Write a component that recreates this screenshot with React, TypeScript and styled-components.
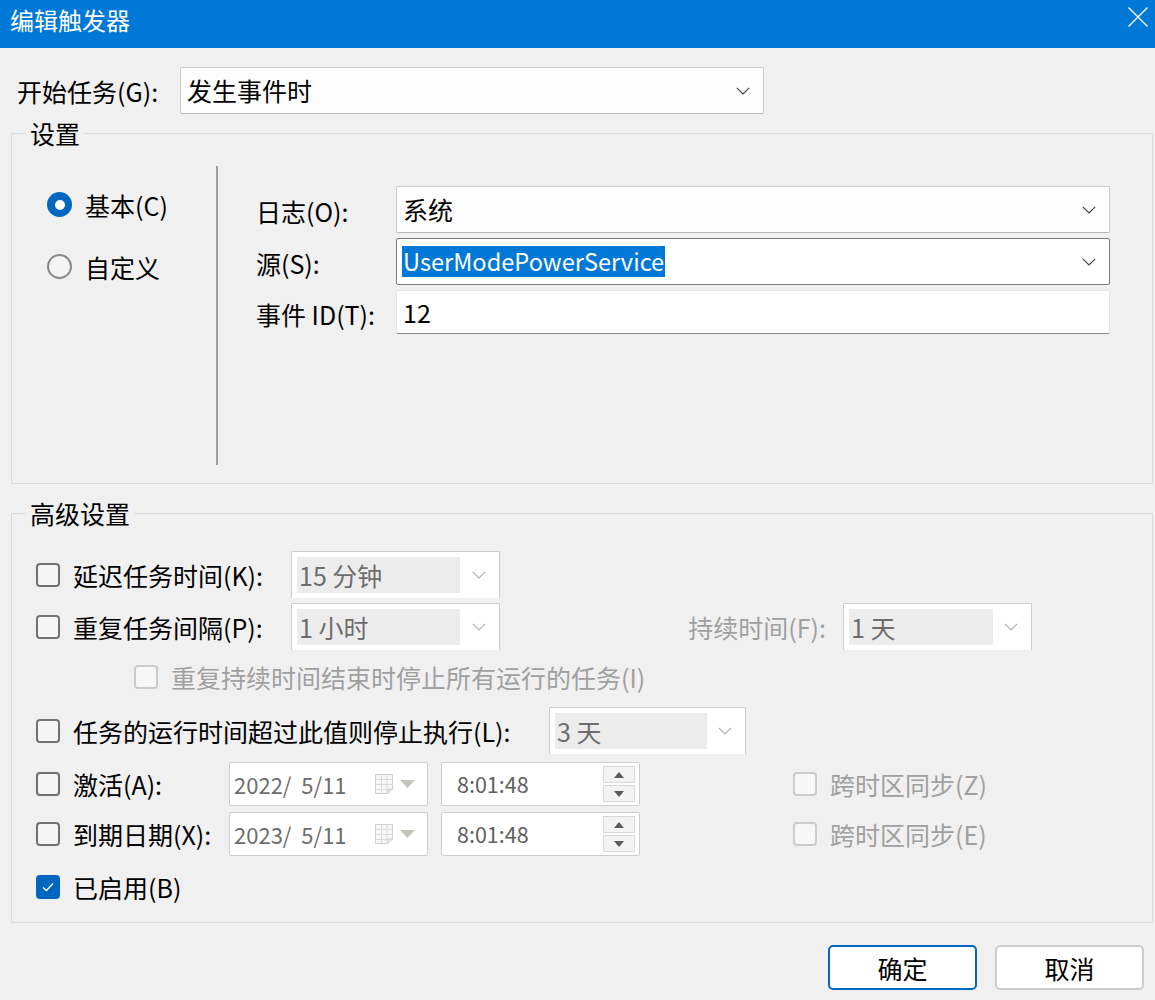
import React from "react";
import styled, { createGlobalStyle } from "styled-components";

const FONT = `"Noto Sans CJK SC", "Noto Sans", sans-serif`;

const GlobalStyle = createGlobalStyle`
  html, body { margin: 0; padding: 0; background: #f0f0f0; }
  body { font-family: ${FONT}; font-size: 25px; color: #000; }
  * { box-sizing: border-box; }
`;

const Window = styled.div`
  width: 1155px;
  height: 1000px;
  background: #f0f0f0;
  display: flex;
  flex-direction: column;
  overflow: hidden;
`;

const TitleBar = styled.div`
  height: 48px;
  flex: none;
  background: #0078d7;
  display: flex;
  align-items: flex-start;
  justify-content: space-between;
  padding: 5px 7px 0 10px;
`;

const Title = styled.div`
  color: #fff;
  font-size: 24px;
  line-height: 30px;
`;

const CloseButton = styled.div`
  width: 20px;
  height: 20px;
  margin-top: 2px;
  display: flex;
`;

const Body = styled.div`
  padding: 0 2px 0 11px;
  display: flex;
  flex-direction: column;
`;

const StartRow = styled.div`
  margin-top: 19px;
  height: 47px;
  display: flex;
  align-items: center;
`;

const StartLabel = styled.div`
  width: 169px;
  padding-left: 6px;
  line-height: 30px;
`;

const Combo = styled.div<{ $w: number; $h?: number; $focus?: boolean }>`
  width: ${(p) => p.$w}px;
  height: ${(p) => p.$h ?? 47}px;
  background: ${(p) => (p.$focus ? "#ffffff" : "#fdfdfd")};
  border: 1px solid ${(p) => (p.$focus ? "#7d7d7d" : "#cdcdcd")};
  border-bottom-color: ${(p) => (p.$focus ? "#7d7d7d" : "#b8b8b8")};
  border-radius: 2px;
  display: flex;
  align-items: center;
  justify-content: space-between;
  padding: 0 13px 0 6px;
`;

const ComboText = styled.span`
  line-height: 31px;
`;

const Highlight = styled.span`
  display: inline-block;
  background: #0078d7;
  color: #fff;
  font-size: 23.6px;
  line-height: 31px;
  padding: 0 1px;
  margin-left: -1px;
`;

const Group = styled.fieldset<{ $mt: number; $h: number }>`
  margin: ${(p) => p.$mt}px 0 0 0;
  padding: 0;
  height: ${(p) => p.$h}px;
  border: 1px solid #dadada;
  min-width: 0;
`;

const Legend = styled.legend`
  margin-left: 14px;
  padding: 0 4px;
  line-height: 30px;
  font-size: 25px;
`;

const SettingsBody = styled.div`
  display: flex;
  padding: 18px 0;
  height: 335px;
`;

const RadioColumn = styled.div`
  width: 204px;
  padding: 26px 0 0 35px;
  display: flex;
  flex-direction: column;
  gap: 37px;
`;

const RadioRow = styled.div`
  height: 25px;
  display: flex;
  align-items: center;
  gap: 13px;
  line-height: 30px;
`;

const RadioDot = styled.span<{ $checked?: boolean }>`
  width: 25px;
  height: 25px;
  border-radius: 50%;
  flex: none;
  display: flex;
  align-items: center;
  justify-content: center;
  background: ${(p) => (p.$checked ? "#0067c0" : "#f4f4f4")};
  border: ${(p) => (p.$checked ? "none" : "2px solid #8a8a8a")};
  &::after {
    content: "";
    display: ${(p) => (p.$checked ? "block" : "none")};
    width: 10px;
    height: 10px;
    border-radius: 50%;
    background: #fff;
  }
`;

const Divider = styled.div`
  width: 2px;
  background: #a0a0a0;
`;

const FieldGrid = styled.div`
  padding: 20px 0 0 38px;
  display: grid;
  grid-template-columns: 140px 714px;
  grid-template-rows: 47px 47px 44px;
  row-gap: 5px;
  align-content: start;
`;

const FieldLabel = styled.div`
  display: flex;
  align-items: center;
  line-height: 30px;
  padding-top: 3px;
`;

const TextField = styled.div`
  background: #ffffff;
  border: 1px solid #e4e4e4;
  border-bottom: 1px solid #8a8a8a;
  border-radius: 2px;
  display: flex;
  align-items: center;
  padding-left: 6px;
  line-height: 30px;
`;

const AdvancedBody = styled.div`
  padding: 23px 0 0 24px;
  display: flex;
  flex-direction: column;
`;

const OptRow = styled.div<{ $h: number; $mt?: number }>`
  height: ${(p) => p.$h}px;
  margin-top: ${(p) => p.$mt ?? 0}px;
  display: flex;
  align-items: center;
`;

const CheckCell = styled.div<{ $w?: number; $ml?: number }>`
  ${(p) => (p.$w ? `width: ${p.$w}px;` : "")}
  margin-left: ${(p) => p.$ml ?? 0}px;
  flex: none;
  display: flex;
  align-items: center;
  gap: 13px;
`;

type CheckState = "off" | "on" | "disabled";

const CheckBox = styled.span<{ $state: CheckState }>`
  width: 24px;
  height: 24px;
  flex: none;
  border-radius: 4px;
  display: flex;
  align-items: center;
  justify-content: center;
  background: ${(p) =>
    p.$state === "on" ? "#0067c0" : p.$state === "disabled" ? "#f7f7f7" : "#f5f5f5"};
  border: ${(p) =>
    p.$state === "on"
      ? "none"
      : p.$state === "disabled"
      ? "2px solid #cccccc"
      : "2px solid #727272"};
`;

const CheckText = styled.span<{ $disabled?: boolean }>`
  line-height: 30px;
  color: ${(p) => (p.$disabled ? "#a0a0a0" : "#000")};
  white-space: nowrap;
`;

const DisabledCombo = styled.div<{ $w: number }>`
  width: ${(p) => p.$w}px;
  height: 47px;
  flex: none;
  background: #fff;
  border: 1px solid #cccccc;
  border-bottom: none;
  border-radius: 2px 2px 0 0;
  display: flex;
  align-items: center;
  padding: 5px 8px 5px 5px;
`;

const DisabledValue = styled.span<{ $w: number }>`
  width: ${(p) => p.$w}px;
  height: 36px;
  background: #ececec;
  color: #6d6d6d;
  line-height: 36px;
  padding-left: 2px;
  flex: none;
`;

const ChevronSlot = styled.span`
  flex: 1;
  display: flex;
  justify-content: flex-end;
  padding-right: 5px;
`;

const SideLabel = styled.div<{ $w: number }>`
  width: ${(p) => p.$w}px;
  flex: none;
  text-align: right;
  padding-right: 17px;
  color: #a0a0a0;
  line-height: 30px;
`;

const DateBox = styled.div`
  width: 199px;
  height: 44px;
  flex: none;
  background: #fff;
  border: 1px solid #cfcfcf;
  border-radius: 2px;
  display: flex;
  align-items: center;
  padding: 0 12px 0 4px;
  color: #6d6d6d;
`;

const DateText = styled.span`
  flex: 1;
  font-size: 22px;
  line-height: 30px;
  white-space: pre;
`;

const DateIcons = styled.span`
  display: flex;
  align-items: center;
  gap: 7px;
`;

const TimeBox = styled.div`
  width: 199px;
  height: 44px;
  flex: none;
  margin-left: 13px;
  background: #fff;
  border: 1px solid #cfcfcf;
  border-radius: 2px;
  display: flex;
  align-items: center;
  justify-content: space-between;
  padding: 0 4px 0 15px;
  color: #606060;
  font-size: 21.5px;
  line-height: 30px;
`;

const Spin = styled.div`
  display: flex;
  flex-direction: column;
  gap: 2px;
`;

const SpinBtn = styled.span`
  width: 32px;
  height: 17px;
  border: 1px solid #d9d9d9;
  background: #f3f3f3;
  display: flex;
  align-items: center;
  justify-content: center;
`;

const Footer = styled.div`
  margin-top: 22px;
  padding-right: 9px;
  display: flex;
  justify-content: flex-end;
  gap: 18px;
`;

const DialogButton = styled.button<{ $primary?: boolean }>`
  width: 149px;
  height: 45px;
  background: #fff;
  border: 2px solid ${(p) => (p.$primary ? "#0067c0" : "#cccccc")};
  border-radius: 5px;
  font-family: ${FONT};
  font-size: 25px;
  color: #000;
  line-height: 30px;
  padding: 0;
`;

const Chevron = ({ color = "#444" }: { color?: string }) => (
  <svg width="14" height="8" viewBox="0 0 14 8">
    <path d="M0.8 0.8 L7 7 L13.2 0.8" fill="none" stroke={color} strokeWidth="1.2" />
  </svg>
);

const CalendarIcon = () => (
  <svg width="18" height="22" viewBox="0 0 18 22">
    <path d="M0.5 1.5 H17.5 V16 L13 20.5 H0.5 Z" fill="#f7f7f7" stroke="#cfcfcf" />
    <path d="M0.5 6.5 H17.5 M0.5 11.5 H17.5 M0.5 16.5 H13 M6.5 1.5 V20.5 M12 1.5 V20.5" stroke="#dcdcdc" />
    <path d="M13 20.5 V16 H17.5" fill="#e6e6e6" stroke="#cfcfcf" />
  </svg>
);

const DropTriangle = () => (
  <svg width="15" height="8" viewBox="0 0 15 8">
    <path d="M0 0 H15 L7.5 8 Z" fill="#c4c4bc" />
  </svg>
);

const SpinArrow = ({ up }: { up?: boolean }) => (
  <svg width="10" height="6" viewBox="0 0 10 6">
    <path d={up ? "M0 6 H10 L5 0 Z" : "M0 0 H10 L5 6 Z"} fill="#5a5a5a" />
  </svg>
);

const Tick = () => (
  <svg width="14" height="12" viewBox="0 0 14 12">
    <path d="M2 6.5 L5.5 9.5 L12 2.5" fill="none" stroke="#fff" strokeWidth="1.3" />
  </svg>
);

const Check = ({ state }: { state: CheckState }) => (
  <CheckBox $state={state}>{state === "on" ? <Tick /> : null}</CheckBox>
);

const DisabledSelect = ({ w, inner, value }: { w: number; inner: number; value: string }) => (
  <DisabledCombo $w={w}>
    <DisabledValue $w={inner}>{value}</DisabledValue>
    <ChevronSlot>
      <Chevron color="#b0b0b0" />
    </ChevronSlot>
  </DisabledCombo>
);

const DateTime = ({ date }: { date: string }) => (
  <>
    <DateBox>
      <DateText>{date}</DateText>
      <DateIcons>
        <CalendarIcon />
        <DropTriangle />
      </DateIcons>
    </DateBox>
    <TimeBox>
      <span>8:01:48</span>
      <Spin>
        <SpinBtn>
          <SpinArrow up />
        </SpinBtn>
        <SpinBtn>
          <SpinArrow />
        </SpinBtn>
      </Spin>
    </TimeBox>
  </>
);

export default function App() {
  return (
    <>
      <GlobalStyle />
      <Window>
        <TitleBar>
          <Title>编辑触发器</Title>
          <CloseButton>
            <svg width="20" height="20" viewBox="0 0 20 20">
              <path d="M0.5 0.5 L19.5 19.5 M19.5 0.5 L0.5 19.5" stroke="#fff" strokeWidth="1.4" />
            </svg>
          </CloseButton>
        </TitleBar>
        <Body>
          <StartRow>
            <StartLabel>开始任务(G):</StartLabel>
            <Combo $w={584}>
              <ComboText>发生事件时</ComboText>
              <Chevron />
            </Combo>
          </StartRow>

          <Group $mt={4} $h={366}>
            <Legend>设置</Legend>
            <SettingsBody>
              <RadioColumn>
                <RadioRow>
                  <RadioDot $checked />
                  <span>基本(C)</span>
                </RadioRow>
                <RadioRow>
                  <RadioDot />
                  <span>自定义</span>
                </RadioRow>
              </RadioColumn>
              <Divider />
              <FieldGrid>
                <FieldLabel>日志(O):</FieldLabel>
                <Combo $w={714}>
                  <ComboText>系统</ComboText>
                  <Chevron />
                </Combo>
                <FieldLabel>源(S):</FieldLabel>
                <Combo $w={714} $focus>
                  <Highlight>UserModePowerService</Highlight>
                  <Chevron />
                </Combo>
                <FieldLabel>事件 ID(T):</FieldLabel>
                <TextField>12</TextField>
              </FieldGrid>
            </SettingsBody>
          </Group>

          <Group $mt={14} $h={425}>
            <Legend>高级设置</Legend>
            <AdvancedBody>
              <OptRow $h={47}>
                <CheckCell $w={255}>
                  <Check state="off" />
                  <CheckText>延迟任务时间(K):</CheckText>
                </CheckCell>
                <DisabledSelect w={209} inner={163} value="15 分钟" />
              </OptRow>
              <OptRow $h={47} $mt={5}>
                <CheckCell $w={255}>
                  <Check state="off" />
                  <CheckText>重复任务间隔(P):</CheckText>
                </CheckCell>
                <DisabledSelect w={209} inner={163} value="1 小时" />
                <SideLabel $w={343}>持续时间(F):</SideLabel>
                <DisabledSelect w={189} inner={144} value="1 天" />
              </OptRow>
              <OptRow $h={53}>
                <CheckCell $ml={98}>
                  <Check state="disabled" />
                  <CheckText $disabled>重复持续时间结束时停止所有运行的任务(I)</CheckText>
                </CheckCell>
              </OptRow>
              <OptRow $h={47} $mt={4}>
                <CheckCell $w={513}>
                  <Check state="off" />
                  <CheckText>任务的运行时间超过此值则停止执行(L):</CheckText>
                </CheckCell>
                <DisabledSelect w={197} inner={152} value="3 天" />
              </OptRow>
              <OptRow $h={44} $mt={8}>
                <CheckCell $w={193}>
                  <Check state="off" />
                  <CheckText>激活(A):</CheckText>
                </CheckCell>
                <DateTime date="2022/  5/11" />
                <CheckCell $ml={153}>
                  <Check state="disabled" />
                  <CheckText $disabled>跨时区同步(Z)</CheckText>
                </CheckCell>
              </OptRow>
              <OptRow $h={44} $mt={6}>
                <CheckCell $w={193}>
                  <Check state="off" />
                  <CheckText>到期日期(X):</CheckText>
                </CheckCell>
                <DateTime date="2023/  5/11" />
                <CheckCell $ml={153}>
                  <Check state="disabled" />
                  <CheckText $disabled>跨时区同步(E)</CheckText>
                </CheckCell>
              </OptRow>
              <OptRow $h={50} $mt={6}>
                <CheckCell>
                  <Check state="on" />
                  <CheckText>已启用(B)</CheckText>
                </CheckCell>
              </OptRow>
            </AdvancedBody>
          </Group>

          <Footer>
            <DialogButton $primary>确定</DialogButton>
            <DialogButton>取消</DialogButton>
          </Footer>
        </Body>
      </Window>
    </>
  );
}
